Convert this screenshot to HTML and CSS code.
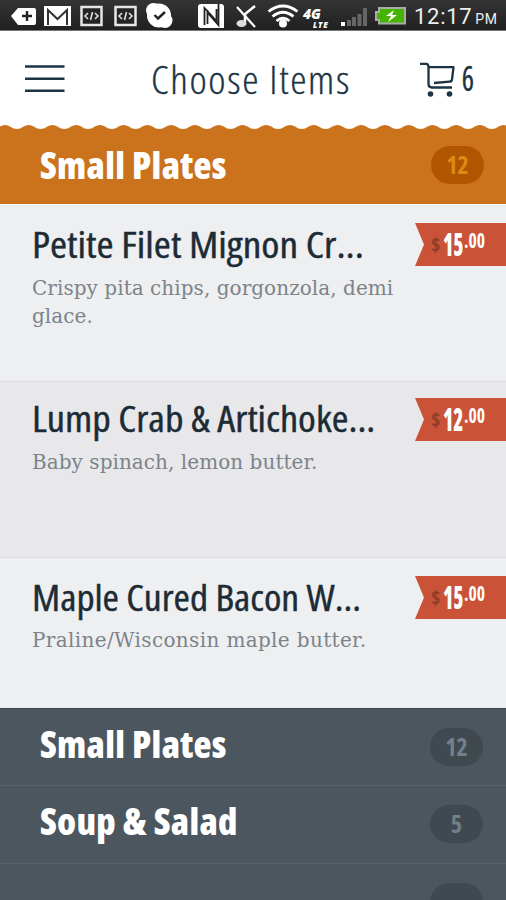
FILE: index.html
```html
<!DOCTYPE html>
<html lang="en">
<head>
    <meta charset="UTF-8">
    <meta name="viewport" content="width=device-width, initial-scale=1.0">
    <title>Choose Items</title>
    <link rel="stylesheet" href="styles.css">
</head>
<body>
    <div class="statusbar">
        <svg class="status-icons" width="410" height="30" viewBox="0 0 410 30">
            <!-- back tag -->
            <path d="M11 16 L18 8 H34 Q36 8 36 10 V23 Q36 25 34 25 H18 Z" fill="#fff"/>
            <path d="M27 11 V21 M22 16 H32" stroke="#222" stroke-width="2.4"/>
            <!-- mail -->
            <rect x="44" y="6" width="27" height="20" fill="#fff"/>
            <path d="M48 25 V10 L57.500 19 L67 10 V25" fill="none" stroke="#333" stroke-width="2"/>
            <!-- code boxes -->
            <g fill="#242424" stroke="#e6e6e6" stroke-width="2.500">
                <rect x="81.500" y="7" width="20" height="18"/>
                <rect x="115.500" y="7" width="20" height="18"/>
            </g>
            <g fill="none" stroke="#ddd" stroke-width="1.600">
                <path d="M88 13 L85 16 L88 19 M95 13 L98 16 L95 19 M92.500 12 L90.500 20"/>
                <path d="M122 13 L119 16 L122 19 M129 13 L132 16 L129 19 M126.500 12 L124.500 20"/>
            </g>
            <!-- check cloud -->
            <circle cx="159" cy="15.500" r="12" fill="#fff"/>
            <circle cx="153.500" cy="10.500" r="7.500" fill="#fff"/>
            <circle cx="165" cy="20.500" r="7.500" fill="#fff"/>
            <path d="M154.500 15 L158 18.500 L165 12" fill="none" stroke="#222" stroke-width="2.400"/>
            <!-- nfc -->
            <path d="M201 4 H221 Q224 4 224 7 V28 H201 Q198 28 198 25 V7 Q198 4 201 4 Z" fill="#fff"/>
            <path d="M204.500 25 V8 L216.500 21 V9 M207.500 10 V24 M218.500 4 V25 L207 12" fill="none" stroke="#222" stroke-width="1.800"/>
            <!-- muted note -->
            <path d="M237 7 L255 27" fill="none" stroke="#fff" stroke-width="2.200"/>
            <path d="M255 6 L245 14 V22" fill="none" stroke="#fff" stroke-width="2.600"/>
            <ellipse cx="241.500" cy="23.500" rx="5" ry="3.500" fill="#ddd"/>
            <!-- wifi -->
            <g fill="none" stroke="#fff" stroke-width="2.800">
                <path d="M268.500 11.500 Q283 .500 297.500 11.500"/>
                <path d="M272.500 16.500 Q283 8 293.500 16.500"/>
                <path d="M276.500 21 Q283 15.500 289.500 21"/>
            </g>
            <circle cx="283" cy="23.500" r="4" fill="#fff"/>
            <text x="303" y="19" class="net">4G</text>
            <text x="313" y="28" class="lte">LTE</text>
            <!-- signal -->
            <rect x="341" y="22" width="4" height="4" fill="#fff"/>
            <path d="M347 20h4v6h-4z M352 17h4v9h-4z M357.500 14h4v12h-4z M363 8h4v18h-4z" fill="#666"/>
            <!-- battery -->
            <path d="M379 8 H405 V23.500 H379 V20 H376 V12 H379 Z" fill="#44b400" stroke="#aaa" stroke-width="2"/>
            <path d="M394 10 L386 16 H391 L388 22 L397 15 H392 Z" fill="#fff"/>
        </svg>
        <div class="clock">12:17<span class="pm">PM</span></div>
    </div>

    <header class="topbar">
        <svg class="menu-icon" width="40" height="28" viewBox="0 0 40 28">
            <path d="M0 1.500H39.500M0 13.700H39.500M0 25.700H39.500" stroke="#1d3444" stroke-width="2.600"/>
        </svg>
        <h1 class="title">Choose Items</h1>
        <svg class="cart-icon" width="36" height="36" viewBox="0 0 36 36">
            <path d="M0 2.800 H6 Q8.500 2.800 8.500 6 V23 Q8.500 26.500 12 26.500 H32 M8.500 6.200 H33.500 L32 18.500 Q31.800 20.500 29.500 20.700 L14 22" fill="none" stroke="#1d3444" stroke-width="2.300" stroke-linejoin="round"/>
            <circle cx="10.500" cy="33" r="2.800" fill="#1d3444"/>
            <circle cx="29.500" cy="33" r="2.800" fill="#1d3444"/>
        </svg>
        <span class="cart-count">6</span>
    </header>

    <section class="category active">
        <svg class="scallop" width="506" height="5">
            <defs>
                <pattern id="wave" x="-6.900" y="0" width="23.750" height="5" patternUnits="userSpaceOnUse">
                    <rect width="23.750" height="5" fill="#cb721d"/>
                    <path d="M0 0 V4 C5 4 7 0 11.875 0 C16.700 0 18.700 4 23.750 4 V0 Z" fill="#fff"/>
                </pattern>
            </defs>
            <rect width="506" height="5" fill="url(#wave)"/>
        </svg>
        <h2 class="category-name">Small Plates</h2>
        <span class="badge">12</span>
    </section>

    <main class="items">
        <article class="item">
            <div class="item-text">
                <h3 class="item-name">Petite Filet Mignon Cr...</h3>
                <p class="item-desc">Crispy pita chips, gorgonzola, demi<br>glace.</p>
            </div>
            <div class="price"><span class="dollar">$</span><span class="whole">15</span><span class="cents">.00</span></div>
        </article>
        <article class="item shaded">
            <div class="item-text">
                <h3 class="item-name">Lump Crab &amp; Artichoke...</h3>
                <p class="item-desc">Baby spinach, lemon butter.</p>
            </div>
            <div class="price"><span class="dollar">$</span><span class="whole">12</span><span class="cents">.00</span></div>
        </article>
        <article class="item last">
            <div class="item-text">
                <h3 class="item-name">Maple Cured Bacon W...</h3>
                <p class="item-desc">Praline/Wisconsin maple butter.</p>
            </div>
            <div class="price"><span class="dollar">$</span><span class="whole">15</span><span class="cents">.00</span></div>
        </article>
    </main>

    <nav class="more">
        <div class="category">
            <h2 class="category-name">Small Plates</h2>
            <span class="badge">12</span>
        </div>
        <div class="category">
            <h2 class="category-name">Soup &amp; Salad</h2>
            <span class="badge">5</span>
        </div>
        <div class="category">
            <span class="badge"></span>
        </div>
    </nav>
</body>
</html>
```
FILE: styles.css
```css
* {
    box-sizing: border-box;
}
body {
    margin: 0;
    width: 506px;
    height: 900px;
    overflow: hidden;
    background: #4c565e;
    font-family: "Open Sans", "Noto Sans", sans-serif;
    font-stretch: 75%;
}
h1, h2, h3, p {
    margin: 0;
    white-space: nowrap;
}
.statusbar {
    display: flex;
    height: 31px;
    background: linear-gradient(#343434, #202020);
    border-bottom: 1px solid #777;
}
.status-icons {
    flex: none;
}
.net {
    font: italic 900 14px "Open Sans", sans-serif;
    fill: #fff;
}
.lte {
    font: italic 900 8px "Open Sans", sans-serif;
    letter-spacing: 0.8px;
    fill: #fff;
}
.clock {
    padding-left: 4px;
    color: #eee;
    font: 22px/34px Roboto, sans-serif;
    letter-spacing: 0.7px;
    white-space: nowrap;
}
.pm {
    margin-left: 3px;
    font-size: 14px;
}
.topbar {
    display: flex;
    align-items: flex-start;
    height: 94px;
    padding: 0 24px;
    background: #fff;
    color: #1d3444;
}
.menu-icon {
    flex: none;
    margin: 34px 0 0 1px;
}
.title {
    width: 269px;
    margin-left: 86px;
    font-size: 38px;
    font-weight: 300;
    line-height: 52px;
    letter-spacing: 1.5px;
    padding-top: 22px;
    transform: scaleX(1.085);
    transform-origin: left;
    -webkit-text-stroke: 0.3px #1d3444;
}
.cart-icon {
    flex: none;
    margin-top: 30px;
}
.cart-count {
    padding: 23px 0 0 5px;
    font-size: 34px;
    line-height: 48px;
    transform: scaleX(0.85);
    -webkit-text-stroke: 0.3px #1d3444;
}
.category {
    display: flex;
    flex-wrap: wrap;
    align-content: flex-start;
    justify-content: space-between;
    height: 78px;
    padding: 0 23px 0 40px;
    border-bottom: 1px solid #57626a;
}
.category-name {
    color: #fff;
    font-size: 37px;
    font-weight: 800;
    line-height: 50px;
    letter-spacing: 0.3px;
    padding-top: 10px;
}
.badge {
    width: 53px;
    height: 38px;
    margin: 19px 0 0 auto;
    border-radius: 19px;
    background: #40494f;
    color: #73808a;
    font-size: 24px;
    font-weight: 700;
    line-height: 37px;
    text-align: center;
}
.more .category:first-child {
    height: 77px;
}
.active {
    height: 79px;
    padding-right: 22px;
    background: #cb721d;
    border: 0;
}
.active .badge {
    margin-top: 16px;
    background: #b05500;
    color: #dc8a13;
}
.scallop {
    display: block;
    flex: none;
    margin-left: -40px;
    margin-right: -22px;
}
.item {
    display: flex;
    justify-content: space-between;
    height: 177px;
    padding: 18px 0 0 32px;
    background: #eeeff1;
    border-top: 1px solid #fafafa;
}
.item-text {
    width: 375px;
}
.shaded {
    height: 176px;
    padding-top: 16px;
    background: #e8e8ea;
    border-color: #dcdde0;
}
.last {
    height: 151px;
    padding-top: 18px;
    border-color: #dcdde0;
}
.item-name {
    margin-top: -1px;
    color: #1c2b35;
    font-size: 37px;
    font-weight: 400;
    line-height: 44px;
    transform: scaleX(1.115);
    transform-origin: left;
    -webkit-text-stroke: 0.4px #1c2b35;
}
.item-desc {
    padding-top: 8px;
    color: #7b838b;
    font-family: "DejaVu Serif", serif;
    font-size: 20px;
    font-stretch: 100%;
    line-height: 28px;
    letter-spacing: 0.05px;
}
.shaded .item-name {
    margin-top: -2px;
    transform: scaleX(1.093);
}
.last .item-name {
    transform: scaleX(1.07);
}
.last .item-desc {
    padding-top: 7px;
    letter-spacing: 0.35px;
}
.price {
    display: flex;
    flex: none;
    width: 91px;
    height: 43px;
    padding-left: 16px;
    background: #c95237;
    clip-path: polygon(0 0, 100% 0, 100% 100%, 0 100%, 9px 50%);
    color: #fff;
    font-weight: 700;
}
.dollar {
    width: 12px;
    color: #8f3c26;
    font-size: 20px;
    line-height: 44px;
}
/* the price digits are narrower than the condensed face */
.whole {
    width: 21px;
    font-size: 31px;
    font-weight: 800;
    line-height: 42px;
    transform: scaleX(0.66);
    transform-origin: left;
}
.cents {
    font-size: 21px;
    line-height: 34px;
    transform: scaleX(0.84);
    transform-origin: left;
}
.more {
    height: 192px;
    background: #4c565e;
    border-top: 1px solid #3c464d;
    overflow: hidden;
}
```
